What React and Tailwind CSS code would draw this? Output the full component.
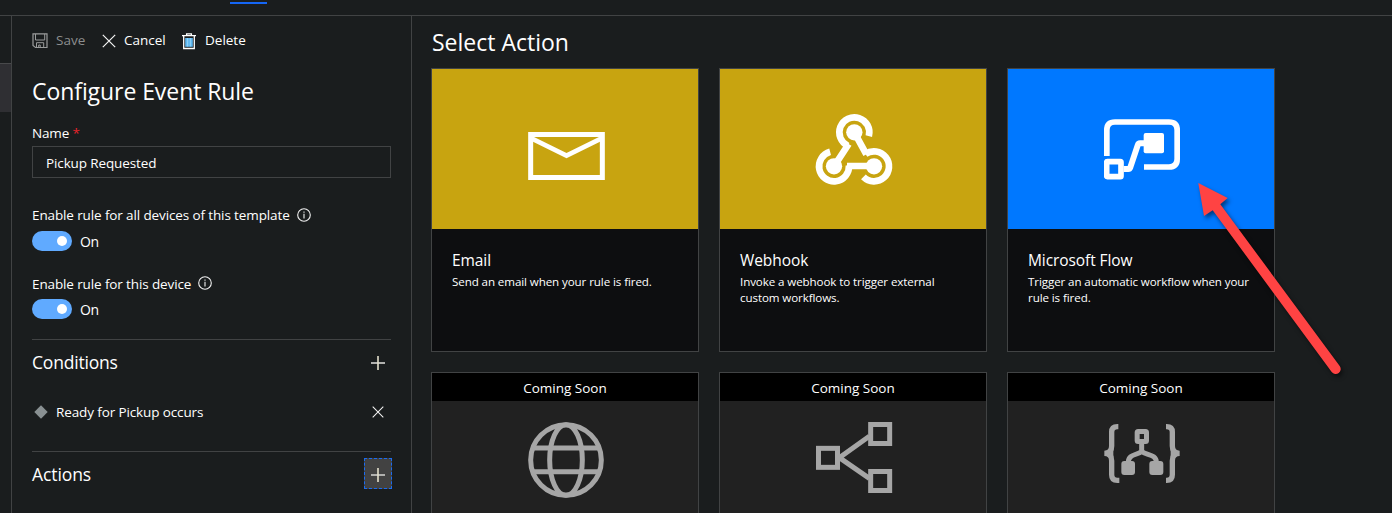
import React from 'react';

const SaveIcon = () => (
  <svg width="16" height="16" viewBox="0 0 16 16" fill="none" stroke="#9a9c9c" strokeWidth="1">
    <path d="M1 .9 H15 V14.5 H3.5 L1 12.5 Z" strokeWidth="1.2" />
    <path d="M3.5 1 V7 H12.7 V1" />
    <path d="M4.5 14.5 V9.7 H11.7 V14.5 M6.7 14.5 V12 H8.2 V14.5" />
  </svg>
);

const Cross = ({ size }) => (
  <svg width={size} height={size} viewBox="0 0 14 14" fill="none" stroke="#f4f4f4" strokeWidth="1.2">
    <path d="M.8 .8 L13.2 13.2 M13.2 .8 L.8 13.2" />
  </svg>
);

const Plus = () => (
  <svg width="14" height="14" viewBox="0 0 14 14" fill="none">
    <path d="M0 7 H14" stroke="#b0b0ae" strokeWidth="2" />
    <path d="M7 0 V14" stroke="#e4e0cc" strokeWidth="1.6" />
  </svg>
);

const TrashIcon = () => (
  <svg width="14" height="17" viewBox="0 0 14 17" fill="none">
    <path d="M3.2 5 H10.8 V13.8 H3.2 Z" fill="#5fb9f2" />
    <path d="M5.6 5 V13.5 M8.4 5 V13.5" stroke="#a5dcfb" strokeWidth=".7" />
    <path d="M1.7 3 V15.5 H12.3 V3 M0 2.6 H14 M4.6 2.5 V.9 H9.4 V2.5" stroke="#fff" strokeWidth="1.3" />
  </svg>
);

const InfoIcon = () => (
  <svg width="14" height="14" viewBox="0 0 14 14" fill="none" stroke="#f2f2f2">
    <circle cx="7" cy="7" r="6.3" strokeWidth="1.1" />
    <path d="M7 5.8 V10.5 M7 3.4 V4.7" strokeWidth="1.1" />
  </svg>
);

const EmailIcon = () => (
  <svg width="77" height="48" viewBox="0 0 231 144" fill="none" stroke="#fff" strokeWidth="15">
    <rect x="8" y="7.5" width="215" height="129" />
    <path d="M12 20 L115.5 71 L219 20" strokeWidth="14" />
  </svg>
);

const WebhookIcon = () => (
  <svg width="80" height="76" viewBox="0 0 240 228" fill="none" stroke="#fff" strokeWidth="20">
    <path d="M164.5 72.6 A45 45 0 1 0 102 101.8" />
    <path d="M48.4 119.5 A45 45 0 1 0 105 160" />
    <path d="M148.2 194.8 A45 45 0 1 0 154.2 126.1" />
    <path d="M60 163 L104 96 M121 61 L157 127 M180 162 H99" />
    <g fill="#fff" stroke="none">
      <circle cx="121" cy="61" r="24.5" />
      <circle cx="60" cy="163" r="24.5" />
      <circle cx="180" cy="163" r="24.5" />
    </g>
  </svg>
);

const FlowIcon = () => (
  <svg width="76" height="61" viewBox="0 0 228 183" fill="none" stroke="#fff" strokeWidth="17">
    <path d="M8.5 111 V33 Q8.5 9 33 9 H195 Q219.5 9 219.5 33 V120 Q219.5 144 195 144 H120" />
    <rect x="8" y="128" width="43" height="45" rx="2" strokeWidth="17" />
    <path d="M59 150 H73 Q77 150 79 145 L101 79 Q103 73 108 73 H121" strokeWidth="18" />
    <rect x="119" y="42" width="61" height="61" rx="6" fill="#fff" stroke="none" />
  </svg>
);

const GlobeIcon = () => (
  <svg width="76" height="76" viewBox="0 0 228 228" fill="none" stroke="#a6a6a6" strokeWidth="15">
    <circle cx="114" cy="114" r="106" />
    <ellipse cx="114" cy="114" rx="49" ry="106" />
    <path d="M14 78 H214 M14 149 H214" />
  </svg>
);

const ShareIcon = () => (
  <svg width="77" height="71" viewBox="0 0 231 213" fill="none" stroke="#a6a6a6" strokeWidth="15">
    <rect x="7.5" y="79" width="57" height="57" />
    <rect x="164" y="7.5" width="57" height="57" />
    <rect x="164" y="148.5" width="57" height="57" />
    <path d="M160 43 L70 107 L160 169" />
  </svg>
);

const BracesIcon = () => (
  <svg width="76" height="59" viewBox="0 0 228 177" fill="none" stroke="#a6a6a6" strokeWidth="16">
    <path d="M43 8 H40 Q23 8 23 24 V66 Q23 88 1 88 Q23 88 23 110 V152 Q23 169 40 169 H46" />
    <path d="M186 8 H188 Q205 8 205 24 V66 Q205 88 227 88 Q205 88 205 110 V152 Q205 169 188 169 H186" />
    <path d="M9 82 L28 72 V104 L9 94 Z M219 82 L200 72 V104 L219 94 Z" fill="#a6a6a6" stroke="none" />
    <rect x="99.500" y="22.500" width="28" height="30" rx="3" strokeWidth="15" />
    <path d="M113 58 V82 M73 114 C73 90 100 94 113 82 C126 94 157 90 157 114" strokeWidth="15" />
    <rect x="52" y="111" width="41" height="42" rx="9" fill="#a6a6a6" stroke="none" />
    <rect x="136" y="111" width="42" height="42" rx="9" fill="#a6a6a6" stroke="none" />
  </svg>
);

const Toggle = () => (
  <div className="flex h-5 items-center">
    <div className="flex h-5 w-10 items-center justify-end rounded-full bg-[#60aaff] pr-[5px]">
      <div className="size-[10px] rounded-full bg-white" />
    </div>
    <span className="ml-2 pt-[2px] text-[14px] leading-5 tracking-[-0.4px]">On</span>
  </div>
);

const ActionCard = ({ title, color, icon, children }) => (
  <div className="h-[284px] w-[268px] border border-[#414344] bg-[#0d0e10]">
    <div className={`flex h-40 items-center justify-center ${color}`}>{icon}</div>
    <div className="px-5 pt-[21px]">
      <h3 className="text-[15.5px] leading-5 tracking-[-0.08px]">{title}</h3>
      <p className="mt-1 text-[11.6px] leading-4 tracking-[-0.1px] whitespace-nowrap">{children}</p>
    </div>
  </div>
);

const SoonCard = ({ icon, pad }) => (
  <div className="h-[284px] w-[268px] border border-[#414344] bg-[#212121]">
    <div className="flex h-7 items-center justify-center bg-black pt-[2px] text-[13.5px]">Coming Soon</div>
    <div className={`flex justify-center pl-[2px] ${pad}`}>{icon}</div>
  </div>
);

export default function App() {
  return (
    <div className="relative flex h-[513px] w-[1392px] flex-col overflow-hidden bg-[#1a1d1e] font-['Open_Sans','Noto_Sans',sans-serif] text-white">
      <header className="h-4 shrink-0 border-b border-[#414344] pt-[2px] pl-[230px]">
        <div className="h-[2px] w-[37px] bg-[#1566f5]" />
      </header>
      <div className="flex min-h-0 flex-1">
        <nav className="w-3 shrink-0 border-r border-[#414344] pt-[47px]">
          <div className="h-[49px] border-t border-[#48494b] bg-[#2f2f33]" />
        </nav>

        <aside className="flex w-[400px] shrink-0 flex-col border-r border-[#414344] pr-5 pl-5">
          <div className="mt-[14px] flex h-[22px] items-center text-[13.5px] leading-5">
            <SaveIcon />
            <span className="mb-[2px] ml-2 w-[29px] whitespace-nowrap text-[#8c8e8e]">Save</span>
            <span className="ml-[17px]"><Cross size={14} /></span>
            <span className="mb-[2px] ml-2 w-[42px] whitespace-nowrap">Cancel</span>
            <span className="ml-4"><TrashIcon /></span>
            <span className="mb-[2px] ml-[9px]">Delete</span>
          </div>

          <h1 className="mt-[23px] h-8 text-[23px] leading-8 tracking-[-0.07px]">Configure Event Rule</h1>

          <label className="mt-4 h-5 text-[13.5px] leading-5 tracking-[-0.15px]">
            Name <span className="text-[#e8242c]">*</span>
          </label>
          <div className="mt-[3px] flex h-8 items-center border border-[#414344] pt-[2px] pl-[13px] text-[13.5px] tracking-[-0.12px]">
            Pickup Requested
          </div>

          <div className="mt-[27px] flex h-5 items-center text-[13.5px] tracking-[-0.12px]">
            <span>Enable rule for all devices of this template</span>
            <span className="ml-[7px]"><InfoIcon /></span>
          </div>
          <div className="mt-[6px]"><Toggle /></div>

          <div className="mt-[23px] flex h-5 items-center text-[13.5px] tracking-[-0.12px]">
            <span>Enable rule for this device</span>
            <span className="mb-[2px] ml-[7px]"><InfoIcon /></span>
          </div>
          <div className="mt-[5px]"><Toggle /></div>

          <div className="mt-5 flex h-[47px] items-center justify-between border-t border-[#414344] pr-[6px]">
            <h2 className="mb-px text-[17.500px] tracking-[-0.2px]">Conditions</h2>
            <Plus />
          </div>
          <div className="mt-[14px] flex h-6 items-center text-[13.5px] tracking-[-0.12px]">
            <svg className="ml-[2px]" width="14" height="14" viewBox="0 0 14 14">
              <path d="M7 .3 L13.700 7 L7 13.700 L.3 7 Z" fill="#899092" />
            </svg>
            <span className="ml-2 flex-1">Ready for Pickup occurs</span>
            <span className="mr-[7px]"><Cross size={12} /></span>
          </div>
          <div className="mt-[27px] flex h-11 items-center justify-between border-t border-[#414344]">
            <h2 className="pt-[2px] text-[17.500px] tracking-[-0.1px]">Actions</h2>
            <div className="-mr-px flex h-[31px] w-7 items-center justify-center border border-dashed border-[#1c6cf0] bg-[#424242] pt-[2px]">
              <Plus />
            </div>
          </div>
        </aside>

        <main className="flex-1 pl-[19px]">
          <h1 className="mt-[10px] ml-px h-8 text-[23px] leading-8">Select Action</h1>
          <div className="mt-[10px] grid grid-cols-[268px_268px_268px] gap-5">
            <ActionCard title="Email" color="bg-[#c8a410]" icon={<span className="mt-[14px] pl-[2px]"><EmailIcon /></span>}>
              Send an email when your rule is fired.
            </ActionCard>
            <ActionCard title="Webhook" color="bg-[#c8a410]" icon={<span className="mt-[2px] pl-[2px]"><WebhookIcon /></span>}>
              Invoke a webhook to trigger external<br />custom workflows.
            </ActionCard>
            <ActionCard title="Microsoft Flow" color="bg-[#0078ff]" icon={<span className="pl-[2px]"><FlowIcon /></span>}>
              Trigger an automatic workflow when your<br />rule is fired.
            </ActionCard>
            <SoonCard pad="pt-[21px]" icon={<GlobeIcon />} />
            <SoonCard pad="pt-[21px]" icon={<ShareIcon />} />
            <SoonCard pad="pt-[23px]" icon={<BracesIcon />} />
          </div>
        </main>
      </div>

      <svg
        className="absolute top-[170px] left-[1185px] drop-shadow-[2px_3px_2px_rgba(0,0,0,0.5)]"
        width="170"
        height="215"
        viewBox="1185 170 170 215"
        fill="#ff4343"
      >
        <path d="M1198.300 183 L1227.700 198 L1220.300 204.300 L1339.700 366 A5 5 0 0 1 1331.700 372 L1212.700 210.300 L1204 216 Z" />
      </svg>
    </div>
  );
}
